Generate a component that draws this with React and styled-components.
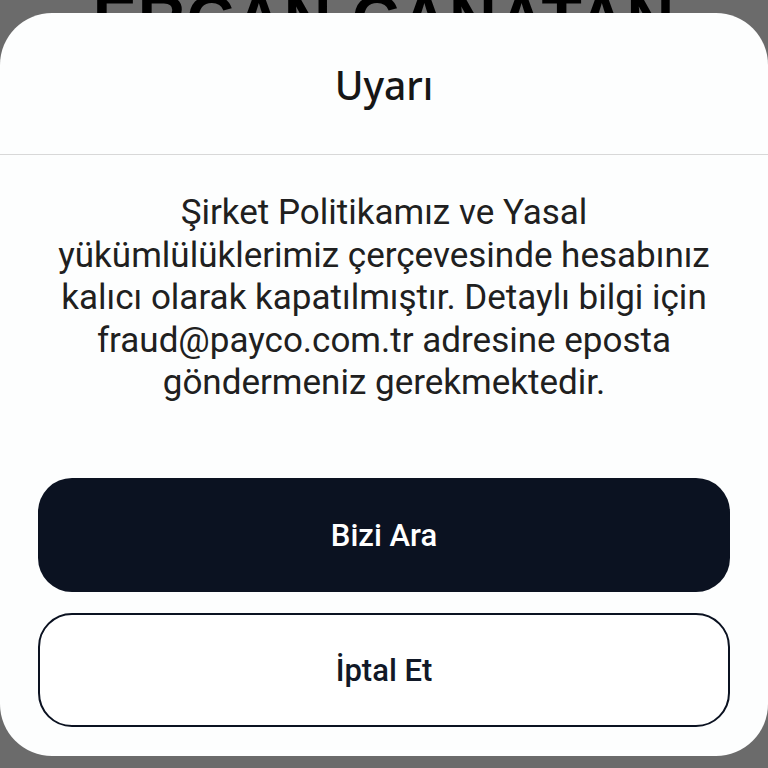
import React from "react";
import styled, { createGlobalStyle } from "styled-components";

const GlobalStyle = createGlobalStyle`
  html, body {
    margin: 0;
    padding: 0;
    background: #ffffff;
  }
  * { box-sizing: border-box; }
`;

const Page = styled.div`
  width: 768px;
  height: 768px;
  position: relative;
  overflow: hidden;
  background: #ffffff;
`;

const OwnerName = styled.h1`
  margin: 0;
  text-align: center;
  font-family: "Liberation Sans", Arial, sans-serif;
  font-weight: 700;
  font-size: 66px;
  line-height: 1;
  letter-spacing: 1px;
  color: #000;
  transform: translateY(-14px);
`;

const Backdrop = styled.div`
  position: absolute;
  inset: 0;
  background: rgba(0, 0, 0, 0.58);
`;

const Sheet = styled.div`
  position: absolute;
  top: 13px;
  left: 0;
  right: 0;
  bottom: 12px;
  background: #fdfefe;
  border-radius: 52px;
  display: flex;
  flex-direction: column;
  overflow: hidden;
`;

const Header = styled.div`
  height: 142px;
  display: flex;
  align-items: center;
  justify-content: center;
  border-bottom: 1.5px solid #d8d8d8;
`;

const Title = styled.h2`
  margin: 0;
  padding-top: 2px;
  font-family: "Noto Sans", "Open Sans", sans-serif;
  font-weight: 500;
  font-size: 39px;
  color: #161616;
`;

const Message = styled.p`
  margin: 0;
  padding: 37px 20px 0;
  text-align: center;
  font-family: Roboto, "Noto Sans", sans-serif;
  font-size: 35px;
  line-height: 42.5px;
  color: #202020;
`;

const Actions = styled.div`
  margin-top: auto;
  padding: 0 38px 29px;
  display: flex;
  flex-direction: column;
  gap: 21px;
`;

const Button = styled.button`
  height: 114px;
  width: 100%;
  border-radius: 34px;
  font-family: Roboto, "Noto Sans", sans-serif;
  font-size: 31px;
  font-weight: 500;
  cursor: pointer;
  background: ${p => (p.$primary ? "#0b1221" : "#ffffff")};
  color: ${p => (p.$primary ? "#ffffff" : "#111827")};
  border: ${p => (p.$primary ? "none" : "2.5px solid #0b1221")};
`;

export default function App() {
  return (
    <>
      <GlobalStyle />
      <Page>
        <OwnerName>ERCAN CANATAN</OwnerName>
        <Backdrop />
        <Sheet>
          <Header>
            <Title>Uyarı</Title>
          </Header>
          <Message>
            Şirket Politikamız ve Yasal<br />
            yükümlülüklerimiz çerçevesinde hesabınız<br />
            kalıcı olarak kapatılmıştır. Detaylı bilgi için<br />
            fraud@payco.com.tr adresine eposta<br />
            göndermeniz gerekmektedir.
          </Message>
          <Actions>
            <Button $primary>Bizi Ara</Button>
            <Button>İptal Et</Button>
          </Actions>
        </Sheet>
      </Page>
    </>
  );
}
